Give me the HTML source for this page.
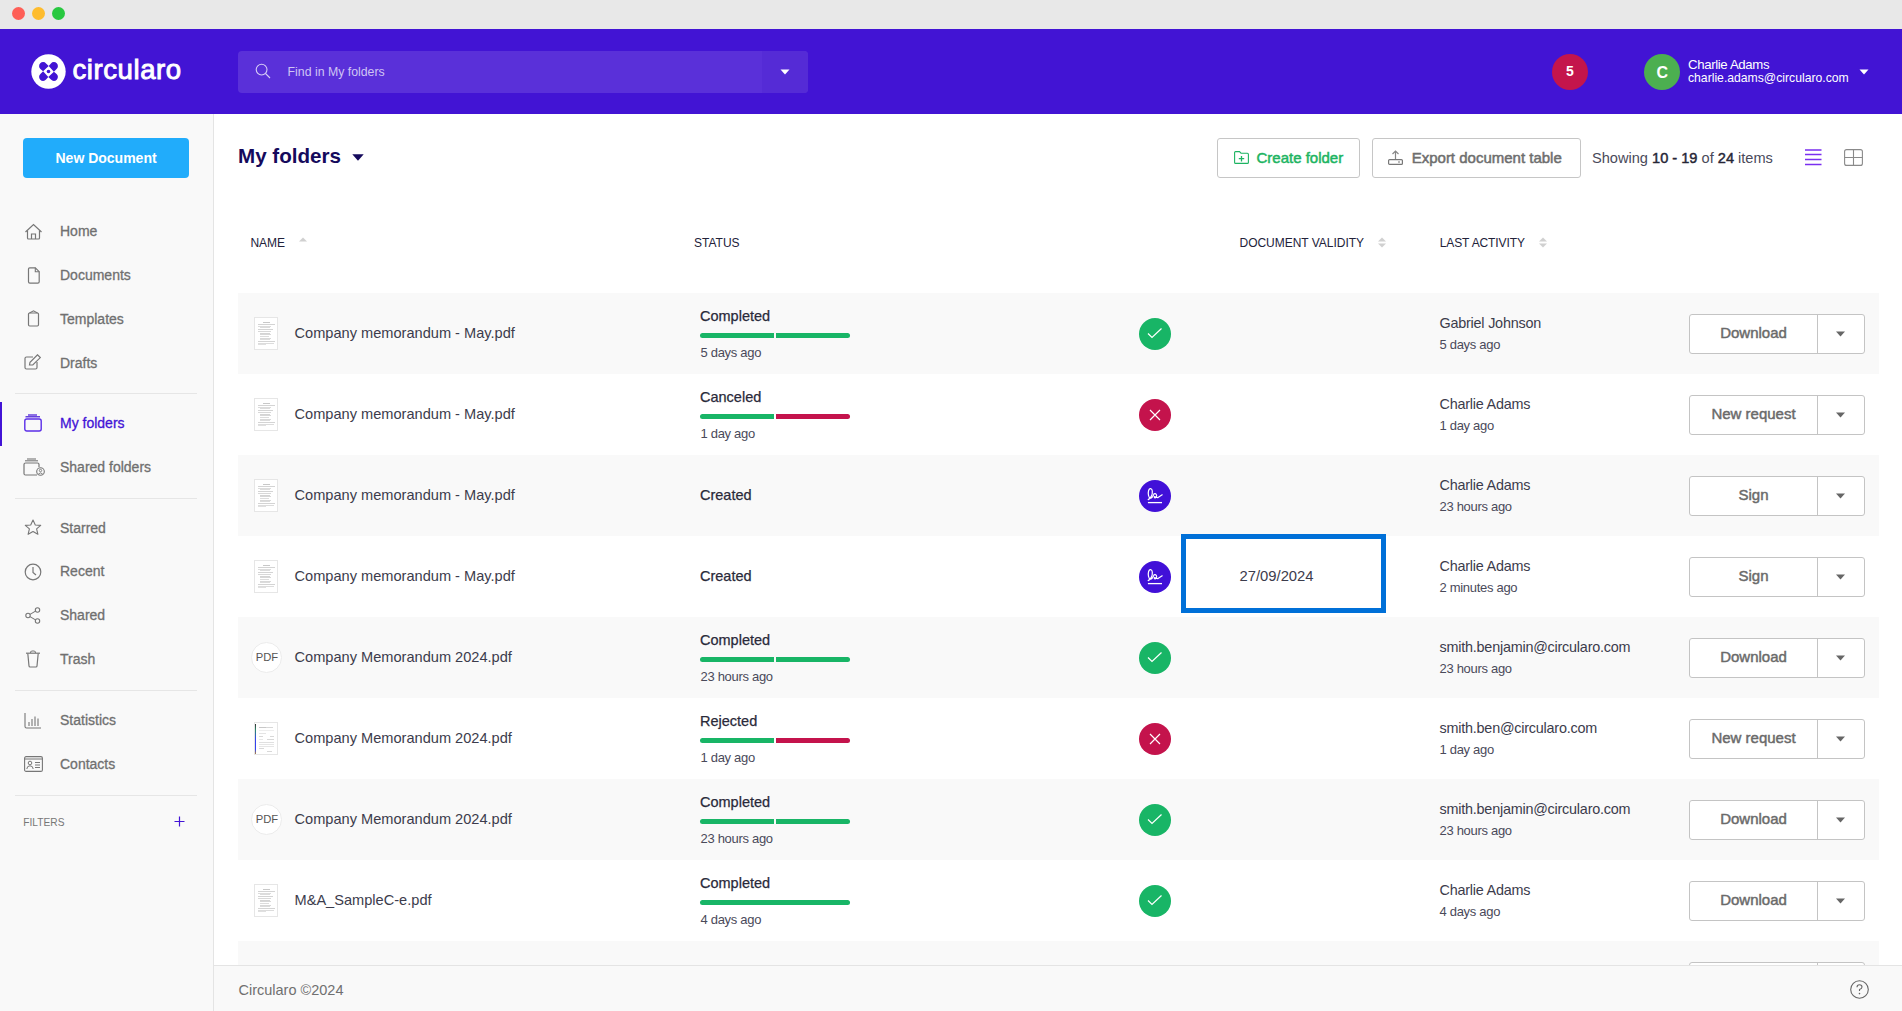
<!DOCTYPE html>
<html><head><meta charset="utf-8"><title>Circularo</title>
<style>
*{box-sizing:border-box;margin:0;padding:0}
html,body{width:1902px;height:1011px;overflow:hidden;background:#fff;font-family:"Liberation Sans",sans-serif}
.t{position:absolute;white-space:nowrap}
.a{position:absolute}
</style></head><body>
<div class="a" style="left:0;top:0;width:1902px;height:29px;background:#e8e8e8"></div>
<div class="a" style="left:12px;top:7px;width:13px;height:13px;border-radius:50%;background:#fe5f57"></div>
<div class="a" style="left:32px;top:7px;width:13px;height:13px;border-radius:50%;background:#febc2e"></div>
<div class="a" style="left:52px;top:7px;width:13px;height:13px;border-radius:50%;background:#28c840"></div>
<div class="a" style="left:0;top:29px;width:1902px;height:85px;background:#4214d4"></div>
<svg class="a" style="left:31.4px;top:54.4px" width="35" height="35" viewBox="0 0 35 35">
<circle cx="17.5" cy="17.5" r="17.2" fill="#fff"/>
<g transform="translate(17.5 17.5)" fill="#4214d4">
<path id="pt" d="M0.2,-5.4 L-2.44,-8.09 A4 4 0 1 0 -8.09,-2.44 L-5.4,-0.2 Z"/>
<path d="M0.2,-5.4 L-2.44,-8.09 A4 4 0 1 0 -8.09,-2.44 L-5.4,-0.2 Z" transform="rotate(90)"/>
<path d="M0.2,-5.4 L-2.44,-8.09 A4 4 0 1 0 -8.09,-2.44 L-5.4,-0.2 Z" transform="rotate(180)"/>
<path d="M0.2,-5.4 L-2.44,-8.09 A4 4 0 1 0 -8.09,-2.44 L-5.4,-0.2 Z" transform="rotate(270)"/>
<circle cx="0" cy="0" r="1.8"/>
</g>
</svg>
<div class="t" style="left:72.5px;top:55.54px;font-size:27.6px;line-height:27.6px;color:#fff;font-weight:400;-webkit-text-stroke:0.9px #fff;letter-spacing:0.55px">circularo</div>
<div class="a" style="left:238px;top:51px;width:570px;height:42px;border-radius:4px;background:#5a30d9;overflow:hidden"><div class="a" style="left:524px;top:0;width:46px;height:42px;background:#552bd6"></div></div>
<svg class="a" style="left:255px;top:63px" width="16" height="16" viewBox="0 0 16 16"><circle cx="6.6" cy="6.6" r="5.4" fill="none" stroke="#d6ccf6" stroke-width="1.1"/><path d="M10.5 10.5 L15 15" stroke="#d6ccf6" stroke-width="1.1"/></svg>
<div class="t" style="left:287.6px;top:65.59px;font-size:12.3px;line-height:12.3px;color:#cfc4f4;font-weight:400;">Find in My folders</div>
<svg class="a" style="left:780px;top:69px" width="10" height="6" viewBox="0 0 10 6"><path d="M0.5 0.5 H9.5 L5 5.5Z" fill="#fff"/></svg>
<div class="a" style="left:1552px;top:54px;width:36px;height:36px;border-radius:50%;background:#c4154c"></div>
<div class="t" style="left:1566px;top:63.95px;font-size:14px;line-height:14px;color:#fff;font-weight:700;">5</div>
<div class="a" style="left:1644px;top:54px;width:36px;height:36px;border-radius:50%;background:#4caf50"></div>
<div class="t" style="left:1656.5px;top:65.46px;font-size:16px;line-height:16px;color:#fff;font-weight:700;">C</div>
<div class="t" style="left:1688px;top:57.73px;font-size:13.2px;line-height:13.2px;color:#fff;font-weight:400;letter-spacing:-0.35px">Charlie Adams</div>
<div class="t" style="left:1688px;top:72.27px;font-size:12.2px;line-height:12.2px;color:#fff;font-weight:400;">charlie.adams@circularo.com</div>
<svg class="a" style="left:1859px;top:69px" width="10" height="6" viewBox="0 0 10 6"><path d="M0.5 0.5 H9.5 L5 5.5Z" fill="#fff"/></svg>
<div class="a" style="left:0;top:114px;width:214px;height:897px;background:#f9f9f9;border-right:1px solid #e4e4e4"></div>
<div class="a" style="left:23px;top:138px;width:166px;height:40px;border-radius:4px;background:#21acfb"></div>
<div class="t" style="left:55.5px;top:151.45px;font-size:14px;line-height:14px;color:#fff;font-weight:700;">New Document</div>
<div class="t" style="left:60px;top:224.45px;font-size:14px;line-height:14px;color:#707070;font-weight:400;-webkit-text-stroke:0.3px #707070">Home</div>
<div class="t" style="left:60px;top:268.45px;font-size:14px;line-height:14px;color:#707070;font-weight:400;-webkit-text-stroke:0.3px #707070">Documents</div>
<div class="t" style="left:60px;top:312.45px;font-size:14px;line-height:14px;color:#707070;font-weight:400;-webkit-text-stroke:0.3px #707070">Templates</div>
<div class="t" style="left:60px;top:355.75px;font-size:14px;line-height:14px;color:#707070;font-weight:400;-webkit-text-stroke:0.3px #707070">Drafts</div>
<div class="t" style="left:60px;top:416.45px;font-size:14px;line-height:14px;color:#4314d6;font-weight:400;-webkit-text-stroke:0.3px #4314d6">My folders</div>
<div class="t" style="left:60px;top:460.45px;font-size:14px;line-height:14px;color:#707070;font-weight:400;-webkit-text-stroke:0.3px #707070">Shared folders</div>
<div class="t" style="left:60px;top:520.65px;font-size:14px;line-height:14px;color:#707070;font-weight:400;-webkit-text-stroke:0.3px #707070">Starred</div>
<div class="t" style="left:60px;top:564.45px;font-size:14px;line-height:14px;color:#707070;font-weight:400;-webkit-text-stroke:0.3px #707070">Recent</div>
<div class="t" style="left:60px;top:608.25px;font-size:14px;line-height:14px;color:#707070;font-weight:400;-webkit-text-stroke:0.3px #707070">Shared</div>
<div class="t" style="left:60px;top:652.15px;font-size:14px;line-height:14px;color:#707070;font-weight:400;-webkit-text-stroke:0.3px #707070">Trash</div>
<div class="t" style="left:60px;top:713.45px;font-size:14px;line-height:14px;color:#707070;font-weight:400;-webkit-text-stroke:0.3px #707070">Statistics</div>
<div class="t" style="left:60px;top:757.45px;font-size:14px;line-height:14px;color:#707070;font-weight:400;-webkit-text-stroke:0.3px #707070">Contacts</div>
<div class="a" style="left:15px;top:393px;width:182px;height:1px;background:#e6e6e6"></div>
<div class="a" style="left:15px;top:498px;width:182px;height:1px;background:#e6e6e6"></div>
<div class="a" style="left:15px;top:690px;width:182px;height:1px;background:#e6e6e6"></div>
<div class="a" style="left:15px;top:795px;width:182px;height:1px;background:#e6e6e6"></div>
<div class="a" style="left:0;top:402px;width:2px;height:44px;background:#4314d6"></div>
<div class="t" style="left:23.3px;top:818.17px;font-size:10.2px;line-height:10.2px;color:#777;font-weight:400;">FILTERS</div>
<svg class="a" style="left:174px;top:816px" width="11" height="11" viewBox="0 0 11 11"><path d="M5.5 0.5V10.5M0.5 5.5H10.5" stroke="#4314d6" stroke-width="1.2"/></svg>
<svg class="a" style="left:24px;top:223px" width="19" height="17" viewBox="0 0 19 17"><path d="M1.5 9 L9.5 1.5 L17.5 9" fill="none" stroke="#777" stroke-width="1.2"/><path d="M3.5 7.5 V15 Q3.5 16 4.5 16 H14.5 Q15.5 16 15.5 15 V7.5" fill="none" stroke="#777" stroke-width="1.2"/><path d="M7.5 16 V11 H11.5 V16" fill="none" stroke="#777" stroke-width="1.2"/></svg>
<svg class="a" style="left:27px;top:267px" width="13" height="17" viewBox="0 0 13 17"><path d="M1.5 2 Q1.5 0.8 2.7 0.8 H8.3 L12.2 4.7 V14.8 Q12.2 16.2 10.8 16.2 H2.9 Q1.5 16.2 1.5 14.8Z" fill="none" stroke="#777" stroke-width="1.2"/><path d="M8.3 0.8 V4.7 H12.2" fill="none" stroke="#777" stroke-width="1.1"/></svg>
<svg class="a" style="left:27px;top:310px" width="13" height="17" viewBox="0 0 13 17"><path d="M1.5 4 Q1.5 3 2.5 3 H10.5 Q11.5 3 11.5 4 V14.8 Q11.5 16 10.3 16 H2.7 Q1.5 16 1.5 14.8Z" fill="none" stroke="#777" stroke-width="1.2"/><path d="M2.5 3 L6.5 0.8 L10.5 3" fill="none" stroke="#777" stroke-width="1.1"/></svg>
<svg class="a" style="left:24px;top:354px" width="18" height="16" viewBox="0 0 18 16"><path d="M9 3 H2.5 Q1 3 1 4.5 V13.5 Q1 15 2.5 15 H11.5 Q13 15 13 13.5 V8" fill="none" stroke="#777" stroke-width="1.2"/><path d="M5.5 11 L6 8.2 L13.5 0.8 L16.3 3.6 L8.8 11Z" fill="none" stroke="#777" stroke-width="1.2"/></svg>
<svg class="a" style="left:24px;top:414px" width="18" height="18" viewBox="0 0 18 18"><path d="M4 1 H13" stroke="#4314d6" stroke-width="1.2"/><path d="M1.5 2.8 H16" stroke="#4314d6" stroke-width="1.2"/><rect x="0.8" y="5" width="16.4" height="12" rx="2" fill="none" stroke="#5b2ee8" stroke-width="1.4"/></svg>
<svg class="a" style="left:23px;top:458px" width="22" height="18" viewBox="0 0 22 18"><path d="M4 1 H13" stroke="#777" stroke-width="1.1"/><path d="M2 2.8 H15" stroke="#777" stroke-width="1.1"/><path d="M14 17 H2.5 Q1 17 1 15.5 V6.5 Q1 5 2.5 5 H14.5 Q16 5 16 6.5 V9" fill="none" stroke="#777" stroke-width="1.2"/><circle cx="17.5" cy="13.5" r="3.8" fill="none" stroke="#777" stroke-width="1.1"/><circle cx="17.5" cy="12.5" r="1.2" fill="none" stroke="#777" stroke-width="0.9"/><path d="M15.3 16 Q17.5 13.8 19.7 16" fill="none" stroke="#777" stroke-width="0.9"/></svg>
<svg class="a" style="left:24px;top:519px" width="18" height="17" viewBox="0 0 18 17"><path d="M9 1 L11.3 6 L16.7 6.4 L12.6 9.9 L13.9 15.3 L9 12.5 L4.1 15.3 L5.4 9.9 L1.3 6.4 L6.7 6Z" fill="none" stroke="#777" stroke-width="1.1" stroke-linejoin="round"/></svg>
<svg class="a" style="left:24px;top:563px" width="18" height="18" viewBox="0 0 18 18"><circle cx="9" cy="9" r="7.8" fill="none" stroke="#777" stroke-width="1.2"/><path d="M9 4 V9.5 L12 12" fill="none" stroke="#777" stroke-width="1.2"/></svg>
<svg class="a" style="left:25px;top:607px" width="16" height="17" viewBox="0 0 16 17"><circle cx="3" cy="8.5" r="2.2" fill="none" stroke="#777" stroke-width="1.1"/><circle cx="12.5" cy="3" r="2.2" fill="none" stroke="#777" stroke-width="1.1"/><circle cx="12.5" cy="14" r="2.2" fill="none" stroke="#777" stroke-width="1.1"/><path d="M5 7.4 L10.5 4.1 M5 9.6 L10.5 12.9" stroke="#777" stroke-width="1.1"/></svg>
<svg class="a" style="left:25px;top:650px" width="16" height="18" viewBox="0 0 16 18"><path d="M1 3.2 H15" stroke="#777" stroke-width="1.2"/><path d="M5.5 3 Q5.5 1 7 1 H9 Q10.5 1 10.5 3" fill="none" stroke="#777" stroke-width="1.1"/><path d="M2.8 3.5 L4 16 Q4.1 17 5.1 17 H10.9 Q11.9 17 12 16 L13.2 3.5" fill="none" stroke="#777" stroke-width="1.2"/></svg>
<svg class="a" style="left:24px;top:712px" width="18" height="17" viewBox="0 0 18 17"><path d="M1 1 V14.5 Q1 16 2.5 16 H17" fill="none" stroke="#777" stroke-width="1.1"/><path d="M5 10 V14 M8 7 V14 M11 4.5 V14 M14 6.5 V14" stroke="#777" stroke-width="1.1"/></svg>
<svg class="a" style="left:24px;top:756px" width="19" height="16" viewBox="0 0 19 16"><rect x="0.6" y="0.6" width="17.8" height="14.8" rx="1.5" fill="none" stroke="#777" stroke-width="1.1"/><path d="M0.8 3 H18.2" stroke="#777" stroke-width="1"/><circle cx="6" cy="7" r="1.8" fill="none" stroke="#777" stroke-width="1"/><path d="M2.8 13 Q3 9.8 6 9.8 Q9 9.8 9.2 13" fill="none" stroke="#777" stroke-width="1"/><path d="M11 6.5 H16 M11 9 H16 M11 11.5 H16" stroke="#777" stroke-width="1"/></svg>
<div class="t" style="left:238px;top:145.56px;font-size:20.6px;line-height:20.6px;color:#150a5c;font-weight:700;">My folders</div>
<svg class="a" style="left:352px;top:154px" width="12" height="7" viewBox="0 0 12 7"><path d="M0.3 0.3 H11.7 L6 6.7Z" fill="#150a5c"/></svg>
<div class="a" style="left:1217px;top:138px;width:143px;height:40px;border:1px solid #c6c6c6;border-radius:3px;background:#fff"></div>
<svg class="a" style="left:1234px;top:151px" width="15" height="13" viewBox="0 0 15 13"><path d="M0.6 1.6 Q0.6 0.6 1.6 0.6 H5.5 L7 2.2 H13.4 Q14.4 2.2 14.4 3.2 V11.4 Q14.4 12.4 13.4 12.4 H1.6 Q0.6 12.4 0.6 11.4Z" fill="none" stroke="#1db462" stroke-width="1.1"/><path d="M7.5 5 V10.5 M4.8 7.7 H10.2" stroke="#1db462" stroke-width="1.3"/></svg>
<div class="t" style="left:1256.5px;top:150.10px;font-size:15px;line-height:15px;color:#1db462;font-weight:400;-webkit-text-stroke:0.5px #1db462">Create folder</div>
<div class="a" style="left:1372px;top:138px;width:209px;height:40px;border:1px solid #c6c6c6;border-radius:3px;background:#fff"></div>
<svg class="a" style="left:1388px;top:150px" width="15" height="15" viewBox="0 0 15 15"><path d="M7.5 1 V9.5 M4.5 4 L7.5 1 L10.5 4" fill="none" stroke="#888" stroke-width="1.2"/><rect x="0.6" y="9.6" width="13.8" height="4.8" rx="1" fill="none" stroke="#777" stroke-width="1.2"/><path d="M10 12 H12" stroke="#777" stroke-width="1"/></svg>
<div class="t" style="left:1411.7px;top:150.20px;font-size:15px;line-height:15px;color:#6e6e6e;font-weight:400;-webkit-text-stroke:0.5px #6e6e6e">Export document table</div>
<div class="t" style="left:1592px;top:150.64px;font-size:14.6px;line-height:14.6px;color:#4a4a5a">Showing <span style="color:#262636;-webkit-text-stroke:0.45px #262636">10 - 19</span> of <span style="color:#262636;-webkit-text-stroke:0.45px #262636">24</span> items</div>
<svg class="a" style="left:1805px;top:149px" width="17" height="17" viewBox="0 0 17 17"><path d="M0 1 H16.5 M0 5.5 H16.5 M0 10.5 H16.5 M0 15.5 H16.5" stroke="#7a2ef0" stroke-width="1.4"/></svg>
<svg class="a" style="left:1844px;top:149px" width="19" height="17" viewBox="0 0 19 17"><rect x="0.6" y="0.6" width="17.8" height="15.8" rx="2" fill="none" stroke="#8a8a8a" stroke-width="1.1"/><path d="M9.5 0.6 V16.4 M0.6 8.5 H18.4" stroke="#8a8a8a" stroke-width="1.1"/></svg>
<div class="t" style="left:250.5px;top:236.84px;font-size:12px;line-height:12px;color:#22223a;font-weight:400;letter-spacing:-0.05px">NAME</div>
<svg class="a" style="left:299px;top:237px" width="8" height="5" viewBox="0 0 8 5"><path d="M0 4.5 L4 0.5 L8 4.5Z" fill="#d0d0d0"/></svg>
<div class="t" style="left:694px;top:236.84px;font-size:12px;line-height:12px;color:#22223a;font-weight:400;">STATUS</div>
<div class="t" style="left:1239.5px;top:237.04px;font-size:12px;line-height:12px;color:#22223a;font-weight:400;letter-spacing:-0.02px">DOCUMENT VALIDITY</div>
<svg class="a" style="left:1378px;top:236.5px" width="8" height="11" viewBox="0 0 8 11"><path d="M0 4.5 L4 0.5 L8 4.5Z M0 6.5 L4 10.5 L8 6.5Z" fill="#d0d0d0"/></svg>
<div class="t" style="left:1439.7px;top:237.04px;font-size:12px;line-height:12px;color:#22223a;font-weight:400;letter-spacing:-0.1px">LAST ACTIVITY</div>
<svg class="a" style="left:1539px;top:236.5px" width="8" height="11" viewBox="0 0 8 11"><path d="M0 4.5 L4 0.5 L8 4.5Z M0 6.5 L4 10.5 L8 6.5Z" fill="#d0d0d0"/></svg>
<div class="a" style="left:238px;top:293px;width:1641px;height:81px;background:#f9f9f9"></div>
<div class="a" style="left:254px;top:317px;width:24px;height:33px;background:#fff;border:1px solid #e6e6e6"><div class="a" style="left:8px;top:3.5px;width:7px;height:1px;background:#c8c8c8"></div><div class="a" style="left:3px;top:6px;width:17px;height:1px;background:#d4d4d4"></div><div class="a" style="left:3px;top:7.5px;width:13px;height:1px;background:#dcdcdc"></div><div class="a" style="left:5px;top:9px;width:10px;height:1px;background:#dcdcdc"></div><div class="a" style="left:3px;top:11px;width:15px;height:1px;background:#d4d4d4"></div><div class="a" style="left:3px;top:13px;width:13px;height:1px;background:#d8d8d8"></div><div class="a" style="left:5px;top:14.5px;width:10px;height:1px;background:#d4d4d4"></div><div class="a" style="left:5px;top:16px;width:11px;height:1px;background:#d8d8d8"></div><div class="a" style="left:5px;top:17.5px;width:9px;height:1px;background:#dcdcdc"></div><div class="a" style="left:5px;top:19.5px;width:11px;height:1px;background:#d8d8d8"></div><div class="a" style="left:5px;top:21px;width:10px;height:1px;background:#dcdcdc"></div><div class="a" style="left:3px;top:23px;width:17px;height:1px;background:#d4d4d4"></div><div class="a" style="left:3px;top:24.5px;width:16px;height:1px;background:#dcdcdc"></div><div class="a" style="left:3px;top:26px;width:8px;height:1px;background:#e0e0e0"></div></div>
<div class="t" style="left:294.5px;top:325.94px;font-size:14.6px;line-height:14.6px;color:#3c3c4c;font-weight:400;">Company memorandum - May.pdf</div>
<div class="t" style="left:700px;top:308.83px;font-size:14.5px;line-height:14.5px;color:#2a2a3a;font-weight:400;-webkit-text-stroke:0.25px #2a2a3a">Completed</div>
<div class="a" style="left:700px;top:333px;width:74px;height:5px;background:#18b566;border-radius:2.5px 0 0 2.5px"></div>
<div class="a" style="left:776px;top:333px;width:74px;height:5px;background:#18b566;border-radius:0 2.5px 2.5px 0"></div>
<div class="t" style="left:700.5px;top:346.40px;font-size:13px;line-height:13px;color:#4a4a5a;font-weight:400;letter-spacing:-0.3px">5 days ago</div>
<svg class="a" style="left:1139px;top:318px" width="32" height="32" viewBox="0 0 32 32"><circle cx="16" cy="16" r="16" fill="#18b566"/><path d="M9 11.5 L13 15.5 L22.5 6.5" transform="translate(0,4)" fill="none" stroke="#fff" stroke-width="1.2"/></svg>
<div class="t" style="left:1439.5px;top:315.81px;font-size:14.4px;line-height:14.4px;color:#3c3c4c;font-weight:400;letter-spacing:-0.22px">Gabriel Johnson</div>
<div class="t" style="left:1439.5px;top:338.30px;font-size:13px;line-height:13px;color:#4a4a5a;font-weight:400;letter-spacing:-0.3px">5 days ago</div>
<div class="a" style="left:1689px;top:314px;width:176px;height:40px;border:1px solid #c4c4c4;border-radius:3px;background:#fff"><div class="a" style="left:126.5px;top:0;width:1px;height:38px;background:#c4c4c4"></div></div>
<div class="t" style="left:1690px;top:325.20px;width:127px;text-align:center;font-size:15px;line-height:15px;font-weight:400;color:#6a6a6a;-webkit-text-stroke:0.45px #6a6a6a">Download</div>
<svg class="a" style="left:1835.8px;top:331px" width="9" height="6" viewBox="0 0 9 6"><path d="M0 0.5 H9 L4.5 5.5Z" fill="#666"/></svg>
<div class="a" style="left:254px;top:398px;width:24px;height:33px;background:#fff;border:1px solid #e6e6e6"><div class="a" style="left:8px;top:3.5px;width:7px;height:1px;background:#c8c8c8"></div><div class="a" style="left:3px;top:6px;width:17px;height:1px;background:#d4d4d4"></div><div class="a" style="left:3px;top:7.5px;width:13px;height:1px;background:#dcdcdc"></div><div class="a" style="left:5px;top:9px;width:10px;height:1px;background:#dcdcdc"></div><div class="a" style="left:3px;top:11px;width:15px;height:1px;background:#d4d4d4"></div><div class="a" style="left:3px;top:13px;width:13px;height:1px;background:#d8d8d8"></div><div class="a" style="left:5px;top:14.5px;width:10px;height:1px;background:#d4d4d4"></div><div class="a" style="left:5px;top:16px;width:11px;height:1px;background:#d8d8d8"></div><div class="a" style="left:5px;top:17.5px;width:9px;height:1px;background:#dcdcdc"></div><div class="a" style="left:5px;top:19.5px;width:11px;height:1px;background:#d8d8d8"></div><div class="a" style="left:5px;top:21px;width:10px;height:1px;background:#dcdcdc"></div><div class="a" style="left:3px;top:23px;width:17px;height:1px;background:#d4d4d4"></div><div class="a" style="left:3px;top:24.5px;width:16px;height:1px;background:#dcdcdc"></div><div class="a" style="left:3px;top:26px;width:8px;height:1px;background:#e0e0e0"></div></div>
<div class="t" style="left:294.5px;top:406.94px;font-size:14.6px;line-height:14.6px;color:#3c3c4c;font-weight:400;">Company memorandum - May.pdf</div>
<div class="t" style="left:700px;top:389.83px;font-size:14.5px;line-height:14.5px;color:#2a2a3a;font-weight:400;-webkit-text-stroke:0.25px #2a2a3a">Canceled</div>
<div class="a" style="left:700px;top:414px;width:74px;height:5px;background:#18b566;border-radius:2.5px 0 0 2.5px"></div>
<div class="a" style="left:776px;top:414px;width:74px;height:5px;background:#c4134c;border-radius:0 2.5px 2.5px 0"></div>
<div class="t" style="left:700.5px;top:427.40px;font-size:13px;line-height:13px;color:#4a4a5a;font-weight:400;letter-spacing:-0.3px">1 day ago</div>
<svg class="a" style="left:1139px;top:399px" width="32" height="32" viewBox="0 0 32 32"><circle cx="16" cy="16" r="16" fill="#c4134c"/><path d="M11 11 L21 21 M21 11 L11 21" fill="none" stroke="#fff" stroke-width="1.2"/></svg>
<div class="t" style="left:1439.5px;top:396.81px;font-size:14.4px;line-height:14.4px;color:#3c3c4c;font-weight:400;letter-spacing:-0.22px">Charlie Adams</div>
<div class="t" style="left:1439.5px;top:419.30px;font-size:13px;line-height:13px;color:#4a4a5a;font-weight:400;letter-spacing:-0.3px">1 day ago</div>
<div class="a" style="left:1689px;top:395px;width:176px;height:40px;border:1px solid #c4c4c4;border-radius:3px;background:#fff"><div class="a" style="left:126.5px;top:0;width:1px;height:38px;background:#c4c4c4"></div></div>
<div class="t" style="left:1690px;top:406.20px;width:127px;text-align:center;font-size:15px;line-height:15px;font-weight:400;color:#6a6a6a;-webkit-text-stroke:0.45px #6a6a6a">New request</div>
<svg class="a" style="left:1835.8px;top:412px" width="9" height="6" viewBox="0 0 9 6"><path d="M0 0.5 H9 L4.5 5.5Z" fill="#666"/></svg>
<div class="a" style="left:238px;top:455px;width:1641px;height:81px;background:#f9f9f9"></div>
<div class="a" style="left:254px;top:479px;width:24px;height:33px;background:#fff;border:1px solid #e6e6e6"><div class="a" style="left:8px;top:3.5px;width:7px;height:1px;background:#c8c8c8"></div><div class="a" style="left:3px;top:6px;width:17px;height:1px;background:#d4d4d4"></div><div class="a" style="left:3px;top:7.5px;width:13px;height:1px;background:#dcdcdc"></div><div class="a" style="left:5px;top:9px;width:10px;height:1px;background:#dcdcdc"></div><div class="a" style="left:3px;top:11px;width:15px;height:1px;background:#d4d4d4"></div><div class="a" style="left:3px;top:13px;width:13px;height:1px;background:#d8d8d8"></div><div class="a" style="left:5px;top:14.5px;width:10px;height:1px;background:#d4d4d4"></div><div class="a" style="left:5px;top:16px;width:11px;height:1px;background:#d8d8d8"></div><div class="a" style="left:5px;top:17.5px;width:9px;height:1px;background:#dcdcdc"></div><div class="a" style="left:5px;top:19.5px;width:11px;height:1px;background:#d8d8d8"></div><div class="a" style="left:5px;top:21px;width:10px;height:1px;background:#dcdcdc"></div><div class="a" style="left:3px;top:23px;width:17px;height:1px;background:#d4d4d4"></div><div class="a" style="left:3px;top:24.5px;width:16px;height:1px;background:#dcdcdc"></div><div class="a" style="left:3px;top:26px;width:8px;height:1px;background:#e0e0e0"></div></div>
<div class="t" style="left:294.5px;top:487.94px;font-size:14.6px;line-height:14.6px;color:#3c3c4c;font-weight:400;">Company memorandum - May.pdf</div>
<div class="t" style="left:700px;top:487.93px;font-size:14.5px;line-height:14.5px;color:#2a2a3a;font-weight:400;-webkit-text-stroke:0.25px #2a2a3a">Created</div>
<svg class="a" style="left:1139px;top:480px" width="32" height="32" viewBox="0 0 32 32"><circle cx="16" cy="16" r="16" fill="#4110d8"/><path d="M9.2 19.6 C11.5 18.5 13.8 15 13.3 11 C13 8.2 10.5 7.5 9.6 10.5 C8.8 13.5 9.5 18 11.5 18.2 C13.5 18.3 14.3 15.5 15 13.9 C17 13 18.5 15.3 17.2 17.2 C16 18.5 14.8 17.5 15.5 16.5 C17 17 18 17.8 19 17.6 L20.5 16.6 L23.2 14.8" fill="none" stroke="#fff" stroke-width="1.2" stroke-linecap="round" stroke-linejoin="round"/><path d="M8.9 22.6 H23" stroke="#fff" stroke-width="1.3"/></svg>
<div class="t" style="left:1439.5px;top:477.81px;font-size:14.4px;line-height:14.4px;color:#3c3c4c;font-weight:400;letter-spacing:-0.22px">Charlie Adams</div>
<div class="t" style="left:1439.5px;top:500.30px;font-size:13px;line-height:13px;color:#4a4a5a;font-weight:400;letter-spacing:-0.3px">23 hours ago</div>
<div class="a" style="left:1689px;top:476px;width:176px;height:40px;border:1px solid #c4c4c4;border-radius:3px;background:#fff"><div class="a" style="left:126.5px;top:0;width:1px;height:38px;background:#c4c4c4"></div></div>
<div class="t" style="left:1690px;top:487.20px;width:127px;text-align:center;font-size:15px;line-height:15px;font-weight:400;color:#6a6a6a;-webkit-text-stroke:0.45px #6a6a6a">Sign</div>
<svg class="a" style="left:1835.8px;top:493px" width="9" height="6" viewBox="0 0 9 6"><path d="M0 0.5 H9 L4.5 5.5Z" fill="#666"/></svg>
<div class="a" style="left:254px;top:560px;width:24px;height:33px;background:#fff;border:1px solid #e6e6e6"><div class="a" style="left:8px;top:3.5px;width:7px;height:1px;background:#c8c8c8"></div><div class="a" style="left:3px;top:6px;width:17px;height:1px;background:#d4d4d4"></div><div class="a" style="left:3px;top:7.5px;width:13px;height:1px;background:#dcdcdc"></div><div class="a" style="left:5px;top:9px;width:10px;height:1px;background:#dcdcdc"></div><div class="a" style="left:3px;top:11px;width:15px;height:1px;background:#d4d4d4"></div><div class="a" style="left:3px;top:13px;width:13px;height:1px;background:#d8d8d8"></div><div class="a" style="left:5px;top:14.5px;width:10px;height:1px;background:#d4d4d4"></div><div class="a" style="left:5px;top:16px;width:11px;height:1px;background:#d8d8d8"></div><div class="a" style="left:5px;top:17.5px;width:9px;height:1px;background:#dcdcdc"></div><div class="a" style="left:5px;top:19.5px;width:11px;height:1px;background:#d8d8d8"></div><div class="a" style="left:5px;top:21px;width:10px;height:1px;background:#dcdcdc"></div><div class="a" style="left:3px;top:23px;width:17px;height:1px;background:#d4d4d4"></div><div class="a" style="left:3px;top:24.5px;width:16px;height:1px;background:#dcdcdc"></div><div class="a" style="left:3px;top:26px;width:8px;height:1px;background:#e0e0e0"></div></div>
<div class="t" style="left:294.5px;top:568.94px;font-size:14.6px;line-height:14.6px;color:#3c3c4c;font-weight:400;">Company memorandum - May.pdf</div>
<div class="t" style="left:700px;top:568.93px;font-size:14.5px;line-height:14.5px;color:#2a2a3a;font-weight:400;-webkit-text-stroke:0.25px #2a2a3a">Created</div>
<svg class="a" style="left:1139px;top:561px" width="32" height="32" viewBox="0 0 32 32"><circle cx="16" cy="16" r="16" fill="#4110d8"/><path d="M9.2 19.6 C11.5 18.5 13.8 15 13.3 11 C13 8.2 10.5 7.5 9.6 10.5 C8.8 13.5 9.5 18 11.5 18.2 C13.5 18.3 14.3 15.5 15 13.9 C17 13 18.5 15.3 17.2 17.2 C16 18.5 14.8 17.5 15.5 16.5 C17 17 18 17.8 19 17.6 L20.5 16.6 L23.2 14.8" fill="none" stroke="#fff" stroke-width="1.2" stroke-linecap="round" stroke-linejoin="round"/><path d="M8.9 22.6 H23" stroke="#fff" stroke-width="1.3"/></svg>
<div class="t" style="left:1439.5px;top:558.81px;font-size:14.4px;line-height:14.4px;color:#3c3c4c;font-weight:400;letter-spacing:-0.22px">Charlie Adams</div>
<div class="t" style="left:1439.5px;top:581.30px;font-size:13px;line-height:13px;color:#4a4a5a;font-weight:400;letter-spacing:-0.3px">2 minutes ago</div>
<div class="a" style="left:1689px;top:557px;width:176px;height:40px;border:1px solid #c4c4c4;border-radius:3px;background:#fff"><div class="a" style="left:126.5px;top:0;width:1px;height:38px;background:#c4c4c4"></div></div>
<div class="t" style="left:1690px;top:568.20px;width:127px;text-align:center;font-size:15px;line-height:15px;font-weight:400;color:#6a6a6a;-webkit-text-stroke:0.45px #6a6a6a">Sign</div>
<svg class="a" style="left:1835.8px;top:574px" width="9" height="6" viewBox="0 0 9 6"><path d="M0 0.5 H9 L4.5 5.5Z" fill="#666"/></svg>
<div class="a" style="left:238px;top:617px;width:1641px;height:81px;background:#f9f9f9"></div>
<div class="a" style="left:250.5px;top:642px;width:31px;height:31px;border-radius:50%;background:#fff;border:1px solid #ececec"></div>
<div class="t" style="left:255.8px;top:651.52px;font-size:11.2px;line-height:11.2px;color:#555;font-weight:400;">PDF</div>
<div class="t" style="left:294.5px;top:649.94px;font-size:14.6px;line-height:14.6px;color:#3c3c4c;font-weight:400;">Company Memorandum 2024.pdf</div>
<div class="t" style="left:700px;top:632.83px;font-size:14.5px;line-height:14.5px;color:#2a2a3a;font-weight:400;-webkit-text-stroke:0.25px #2a2a3a">Completed</div>
<div class="a" style="left:700px;top:657px;width:74px;height:5px;background:#18b566;border-radius:2.5px 0 0 2.5px"></div>
<div class="a" style="left:776px;top:657px;width:74px;height:5px;background:#18b566;border-radius:0 2.5px 2.5px 0"></div>
<div class="t" style="left:700.5px;top:670.40px;font-size:13px;line-height:13px;color:#4a4a5a;font-weight:400;letter-spacing:-0.3px">23 hours ago</div>
<svg class="a" style="left:1139px;top:642px" width="32" height="32" viewBox="0 0 32 32"><circle cx="16" cy="16" r="16" fill="#18b566"/><path d="M9 11.5 L13 15.5 L22.5 6.5" transform="translate(0,4)" fill="none" stroke="#fff" stroke-width="1.2"/></svg>
<div class="t" style="left:1439.5px;top:639.81px;font-size:14.4px;line-height:14.4px;color:#3c3c4c;font-weight:400;letter-spacing:-0.22px">smith.benjamin@circularo.com</div>
<div class="t" style="left:1439.5px;top:662.30px;font-size:13px;line-height:13px;color:#4a4a5a;font-weight:400;letter-spacing:-0.3px">23 hours ago</div>
<div class="a" style="left:1689px;top:638px;width:176px;height:40px;border:1px solid #c4c4c4;border-radius:3px;background:#fff"><div class="a" style="left:126.5px;top:0;width:1px;height:38px;background:#c4c4c4"></div></div>
<div class="t" style="left:1690px;top:649.20px;width:127px;text-align:center;font-size:15px;line-height:15px;font-weight:400;color:#6a6a6a;-webkit-text-stroke:0.45px #6a6a6a">Download</div>
<svg class="a" style="left:1835.8px;top:655px" width="9" height="6" viewBox="0 0 9 6"><path d="M0 0.5 H9 L4.5 5.5Z" fill="#666"/></svg>
<div class="a" style="left:254px;top:722px;width:24px;height:33px;background:#fff;border:1px solid #e6e6e6"><div class="a" style="left:0px;top:1px;width:1.3px;height:30px;background:linear-gradient(#333,#2a8a6a 20%,#3344ee 50%,#3344ee 85%,#b08040)"></div><div class="a" style="left:4px;top:4px;width:9px;height:1px;background:#c8c8c8"></div><div class="a" style="left:11px;top:4px;width:7px;height:1px;background:#d8d8d8"></div><div class="a" style="left:4px;top:7px;width:15px;height:1px;background:#eeeeee"></div><div class="a" style="left:4px;top:10px;width:7px;height:1px;background:#e4e4e4"></div><div class="a" style="left:4px;top:13px;width:4px;height:1px;background:#d8d8d8"></div><div class="a" style="left:15px;top:13px;width:4px;height:1px;background:#d8d8d8"></div><div class="a" style="left:4px;top:16px;width:4px;height:1px;background:#e8e8e8"></div><div class="a" style="left:12px;top:16px;width:7px;height:1px;background:#d8d8d8"></div><div class="a" style="left:4px;top:19px;width:15px;height:1px;background:#e0e0e0"></div><div class="a" style="left:4px;top:20.5px;width:15px;height:1px;background:#e6e6e6"></div><div class="a" style="left:4px;top:23px;width:15px;height:1px;background:#e6e6e6"></div><div class="a" style="left:4px;top:25px;width:5px;height:1px;background:#d8d8d8"></div><div class="a" style="left:12px;top:28px;width:5px;height:1px;background:#d8d8d8"></div></div>
<div class="t" style="left:294.5px;top:730.94px;font-size:14.6px;line-height:14.6px;color:#3c3c4c;font-weight:400;">Company Memorandum 2024.pdf</div>
<div class="t" style="left:700px;top:713.83px;font-size:14.5px;line-height:14.5px;color:#2a2a3a;font-weight:400;-webkit-text-stroke:0.25px #2a2a3a">Rejected</div>
<div class="a" style="left:700px;top:738px;width:74px;height:5px;background:#18b566;border-radius:2.5px 0 0 2.5px"></div>
<div class="a" style="left:776px;top:738px;width:74px;height:5px;background:#c4134c;border-radius:0 2.5px 2.5px 0"></div>
<div class="t" style="left:700.5px;top:751.40px;font-size:13px;line-height:13px;color:#4a4a5a;font-weight:400;letter-spacing:-0.3px">1 day ago</div>
<svg class="a" style="left:1139px;top:723px" width="32" height="32" viewBox="0 0 32 32"><circle cx="16" cy="16" r="16" fill="#c4134c"/><path d="M11 11 L21 21 M21 11 L11 21" fill="none" stroke="#fff" stroke-width="1.2"/></svg>
<div class="t" style="left:1439.5px;top:720.81px;font-size:14.4px;line-height:14.4px;color:#3c3c4c;font-weight:400;letter-spacing:-0.22px">smith.ben@circularo.com</div>
<div class="t" style="left:1439.5px;top:743.30px;font-size:13px;line-height:13px;color:#4a4a5a;font-weight:400;letter-spacing:-0.3px">1 day ago</div>
<div class="a" style="left:1689px;top:719px;width:176px;height:40px;border:1px solid #c4c4c4;border-radius:3px;background:#fff"><div class="a" style="left:126.5px;top:0;width:1px;height:38px;background:#c4c4c4"></div></div>
<div class="t" style="left:1690px;top:730.20px;width:127px;text-align:center;font-size:15px;line-height:15px;font-weight:400;color:#6a6a6a;-webkit-text-stroke:0.45px #6a6a6a">New request</div>
<svg class="a" style="left:1835.8px;top:736px" width="9" height="6" viewBox="0 0 9 6"><path d="M0 0.5 H9 L4.5 5.5Z" fill="#666"/></svg>
<div class="a" style="left:238px;top:779px;width:1641px;height:81px;background:#f9f9f9"></div>
<div class="a" style="left:250.5px;top:804px;width:31px;height:31px;border-radius:50%;background:#fff;border:1px solid #ececec"></div>
<div class="t" style="left:255.8px;top:813.52px;font-size:11.2px;line-height:11.2px;color:#555;font-weight:400;">PDF</div>
<div class="t" style="left:294.5px;top:811.94px;font-size:14.6px;line-height:14.6px;color:#3c3c4c;font-weight:400;">Company Memorandum 2024.pdf</div>
<div class="t" style="left:700px;top:794.83px;font-size:14.5px;line-height:14.5px;color:#2a2a3a;font-weight:400;-webkit-text-stroke:0.25px #2a2a3a">Completed</div>
<div class="a" style="left:700px;top:819px;width:74px;height:5px;background:#18b566;border-radius:2.5px 0 0 2.5px"></div>
<div class="a" style="left:776px;top:819px;width:74px;height:5px;background:#18b566;border-radius:0 2.5px 2.5px 0"></div>
<div class="t" style="left:700.5px;top:832.40px;font-size:13px;line-height:13px;color:#4a4a5a;font-weight:400;letter-spacing:-0.3px">23 hours ago</div>
<svg class="a" style="left:1139px;top:804px" width="32" height="32" viewBox="0 0 32 32"><circle cx="16" cy="16" r="16" fill="#18b566"/><path d="M9 11.5 L13 15.5 L22.5 6.5" transform="translate(0,4)" fill="none" stroke="#fff" stroke-width="1.2"/></svg>
<div class="t" style="left:1439.5px;top:801.81px;font-size:14.4px;line-height:14.4px;color:#3c3c4c;font-weight:400;letter-spacing:-0.22px">smith.benjamin@circularo.com</div>
<div class="t" style="left:1439.5px;top:824.30px;font-size:13px;line-height:13px;color:#4a4a5a;font-weight:400;letter-spacing:-0.3px">23 hours ago</div>
<div class="a" style="left:1689px;top:800px;width:176px;height:40px;border:1px solid #c4c4c4;border-radius:3px;background:#fff"><div class="a" style="left:126.5px;top:0;width:1px;height:38px;background:#c4c4c4"></div></div>
<div class="t" style="left:1690px;top:811.20px;width:127px;text-align:center;font-size:15px;line-height:15px;font-weight:400;color:#6a6a6a;-webkit-text-stroke:0.45px #6a6a6a">Download</div>
<svg class="a" style="left:1835.8px;top:817px" width="9" height="6" viewBox="0 0 9 6"><path d="M0 0.5 H9 L4.5 5.5Z" fill="#666"/></svg>
<div class="a" style="left:254px;top:884px;width:24px;height:33px;background:#fff;border:1px solid #e6e6e6"><div class="a" style="left:8px;top:3.5px;width:7px;height:1px;background:#c8c8c8"></div><div class="a" style="left:3px;top:6px;width:17px;height:1px;background:#d4d4d4"></div><div class="a" style="left:3px;top:7.5px;width:13px;height:1px;background:#dcdcdc"></div><div class="a" style="left:5px;top:9px;width:10px;height:1px;background:#dcdcdc"></div><div class="a" style="left:3px;top:11px;width:15px;height:1px;background:#d4d4d4"></div><div class="a" style="left:3px;top:13px;width:13px;height:1px;background:#d8d8d8"></div><div class="a" style="left:5px;top:14.5px;width:10px;height:1px;background:#d4d4d4"></div><div class="a" style="left:5px;top:16px;width:11px;height:1px;background:#d8d8d8"></div><div class="a" style="left:5px;top:17.5px;width:9px;height:1px;background:#dcdcdc"></div><div class="a" style="left:5px;top:19.5px;width:11px;height:1px;background:#d8d8d8"></div><div class="a" style="left:5px;top:21px;width:10px;height:1px;background:#dcdcdc"></div><div class="a" style="left:3px;top:23px;width:17px;height:1px;background:#d4d4d4"></div><div class="a" style="left:3px;top:24.5px;width:16px;height:1px;background:#dcdcdc"></div><div class="a" style="left:3px;top:26px;width:8px;height:1px;background:#e0e0e0"></div></div>
<div class="t" style="left:294.5px;top:892.94px;font-size:14.6px;line-height:14.6px;color:#3c3c4c;font-weight:400;">M&amp;A_SampleC-e.pdf</div>
<div class="t" style="left:700px;top:875.83px;font-size:14.5px;line-height:14.5px;color:#2a2a3a;font-weight:400;-webkit-text-stroke:0.25px #2a2a3a">Completed</div>
<div class="a" style="left:700px;top:900px;width:150px;height:5px;background:#18b566;border-radius:2.5px"></div>
<div class="t" style="left:700.5px;top:913.40px;font-size:13px;line-height:13px;color:#4a4a5a;font-weight:400;letter-spacing:-0.3px">4 days ago</div>
<svg class="a" style="left:1139px;top:885px" width="32" height="32" viewBox="0 0 32 32"><circle cx="16" cy="16" r="16" fill="#18b566"/><path d="M9 11.5 L13 15.5 L22.5 6.5" transform="translate(0,4)" fill="none" stroke="#fff" stroke-width="1.2"/></svg>
<div class="t" style="left:1439.5px;top:882.81px;font-size:14.4px;line-height:14.4px;color:#3c3c4c;font-weight:400;letter-spacing:-0.22px">Charlie Adams</div>
<div class="t" style="left:1439.5px;top:905.30px;font-size:13px;line-height:13px;color:#4a4a5a;font-weight:400;letter-spacing:-0.3px">4 days ago</div>
<div class="a" style="left:1689px;top:881px;width:176px;height:40px;border:1px solid #c4c4c4;border-radius:3px;background:#fff"><div class="a" style="left:126.5px;top:0;width:1px;height:38px;background:#c4c4c4"></div></div>
<div class="t" style="left:1690px;top:892.20px;width:127px;text-align:center;font-size:15px;line-height:15px;font-weight:400;color:#6a6a6a;-webkit-text-stroke:0.45px #6a6a6a">Download</div>
<svg class="a" style="left:1835.8px;top:898px" width="9" height="6" viewBox="0 0 9 6"><path d="M0 0.5 H9 L4.5 5.5Z" fill="#666"/></svg>
<div class="a" style="left:238px;top:941px;width:1641px;height:81px;background:#f9f9f9"></div>
<div class="a" style="left:254px;top:965px;width:24px;height:33px;background:#fff;border:1px solid #e6e6e6"><div class="a" style="left:8px;top:3.5px;width:7px;height:1px;background:#c8c8c8"></div><div class="a" style="left:3px;top:6px;width:17px;height:1px;background:#d4d4d4"></div><div class="a" style="left:3px;top:7.5px;width:13px;height:1px;background:#dcdcdc"></div><div class="a" style="left:5px;top:9px;width:10px;height:1px;background:#dcdcdc"></div><div class="a" style="left:3px;top:11px;width:15px;height:1px;background:#d4d4d4"></div><div class="a" style="left:3px;top:13px;width:13px;height:1px;background:#d8d8d8"></div><div class="a" style="left:5px;top:14.5px;width:10px;height:1px;background:#d4d4d4"></div><div class="a" style="left:5px;top:16px;width:11px;height:1px;background:#d8d8d8"></div><div class="a" style="left:5px;top:17.5px;width:9px;height:1px;background:#dcdcdc"></div><div class="a" style="left:5px;top:19.5px;width:11px;height:1px;background:#d8d8d8"></div><div class="a" style="left:5px;top:21px;width:10px;height:1px;background:#dcdcdc"></div><div class="a" style="left:3px;top:23px;width:17px;height:1px;background:#d4d4d4"></div><div class="a" style="left:3px;top:24.5px;width:16px;height:1px;background:#dcdcdc"></div><div class="a" style="left:3px;top:26px;width:8px;height:1px;background:#e0e0e0"></div></div>
<div class="t" style="left:294.5px;top:973.94px;font-size:14.6px;line-height:14.6px;color:#3c3c4c;font-weight:400;">Company memorandum - May.pdf</div>
<div class="t" style="left:700px;top:973.93px;font-size:14.5px;line-height:14.5px;color:#2a2a3a;font-weight:400;-webkit-text-stroke:0.25px #2a2a3a">Created</div>
<svg class="a" style="left:1139px;top:966px" width="32" height="32" viewBox="0 0 32 32"><circle cx="16" cy="16" r="16" fill="#18b566"/><path d="M9 11.5 L13 15.5 L22.5 6.5" transform="translate(0,4)" fill="none" stroke="#fff" stroke-width="1.2"/></svg>
<div class="t" style="left:1439.5px;top:963.81px;font-size:14.4px;line-height:14.4px;color:#3c3c4c;font-weight:400;letter-spacing:-0.22px">Charlie Adams</div>
<div class="t" style="left:1439.5px;top:986.30px;font-size:13px;line-height:13px;color:#4a4a5a;font-weight:400;letter-spacing:-0.3px">4 days ago</div>
<div class="a" style="left:1689px;top:962px;width:176px;height:40px;border:1px solid #c4c4c4;border-radius:3px;background:#fff"><div class="a" style="left:126.5px;top:0;width:1px;height:38px;background:#c4c4c4"></div></div>
<div class="t" style="left:1690px;top:973.20px;width:127px;text-align:center;font-size:15px;line-height:15px;font-weight:400;color:#6a6a6a;-webkit-text-stroke:0.45px #6a6a6a">Download</div>
<svg class="a" style="left:1835.8px;top:979px" width="9" height="6" viewBox="0 0 9 6"><path d="M0 0.5 H9 L4.5 5.5Z" fill="#666"/></svg>
<div class="a" style="left:1181px;top:534px;width:205px;height:79px;border:5px solid #0070d8;background:#fff"></div>
<div class="t" style="left:1239.5px;top:569.07px;font-size:14.8px;line-height:14.8px;color:#3c3c4c;font-weight:400;">27/09/2024</div>
<div class="a" style="left:214px;top:965px;width:1688px;height:46px;background:#f9f9f9;border-top:1px solid #e4e4e4"></div>
<div class="t" style="left:238.5px;top:982.73px;font-size:14.5px;line-height:14.5px;color:#707070;font-weight:400;">Circularo ©2024</div>
<svg class="a" style="left:1850px;top:980px" width="19" height="19" viewBox="0 0 19 19"><circle cx="9.5" cy="9.5" r="8.8" fill="none" stroke="#666" stroke-width="1.1"/><path d="M7 7.3 Q7 4.8 9.5 4.8 Q12 4.8 12 7 Q12 8.6 9.5 9.6 V11" fill="none" stroke="#666" stroke-width="1.1"/><circle cx="9.5" cy="13.6" r="0.8" fill="#666"/></svg>
</body></html>
